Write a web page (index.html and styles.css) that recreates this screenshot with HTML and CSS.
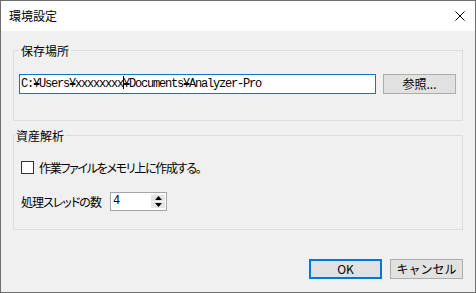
FILE: index.html
```html
<!DOCTYPE html>
<html lang="ja">
<head>
<meta charset="UTF-8">
<title>環境設定</title>
<link rel="stylesheet" href="styles.css">
</head>
<body>
<div class="window">
    <div class="titlebar">
        <span class="title">環境設定</span>
        <svg class="close" width="10" height="10" viewBox="0 0 10 10">
            <path d="M0.5 0.5 L9.5 9.5 M9.5 0.5 L0.5 9.5" stroke="#000" stroke-width="1" fill="none"/>
        </svg>
    </div>
    <div class="content">
        <div class="group group-path">
            <div class="group-title">保存場所</div>
            <div class="path-row">
                <div class="textbox">C:¥Users¥xxxxxxxx<span class="caret"></span>¥Documents¥Analyzer-Pro</div>
                <button class="btn">参照...</button>
            </div>
        </div>
        <div class="group group-analysis">
            <div class="group-title">資産解析</div>
            <label class="check-row"><span class="checkbox"></span>作業ファイルをメモリ上に作成する。</label>
            <div class="spin-row">
                <span class="spin-label">処理スレッドの数</span>
                <div class="spinbox">
                    <span class="spin-value">4</span>
                    <div class="spin-buttons">
                        <span class="spin-btn">
                            <svg width="7" height="4" viewBox="0 0 7 4"><path d="M3.5 0 L7 4 L0 4 Z" fill="#000"/></svg>
                        </span>
                        <span class="spin-btn">
                            <svg width="7" height="4" viewBox="0 0 7 4"><path d="M0 0 L7 0 L3.5 4 Z" fill="#000"/></svg>
                        </span>
                    </div>
                </div>
            </div>
        </div>
        <div class="footer">
            <button class="btn btn-default">OK</button>
            <button class="btn">キャンセル</button>
        </div>
    </div>
</div>
</body>
</html>
```

FILE: styles.css
```css
body {
    margin: 0;
    font-family: "Noto Sans CJK JP", sans-serif;
    font-size: 12px;
    color: #000000;
}
.window {
    width: 476px;
    height: 293px;
    box-sizing: border-box;
    border: 1px solid #6e6e6e;
    background-color: #f0f0f0;
    display: flex;
    flex-direction: column;
}
.titlebar {
    height: 30px;
    flex: none;
    background-color: #ffffff;
    display: flex;
    align-items: center;
    justify-content: space-between;
    padding: 0 10px 0 8px;
}
.title {
    line-height: 16px;
}
.content {
    flex: 1;
    padding: 19px 12px 0 12px;
}
.group {
    border: 1px solid #dcdcdc;
}
/* title sits on the top border, like a legend */
.group-title {
    width: max-content;
    margin-top: -8px;
    line-height: 15px;
    padding: 0 2px;
    background-color: #f0f0f0;
}
.group-path {
    padding: 0 6px 26px 5px;
}
.group-path .group-title {
    margin-left: 0;
}
.group-analysis {
    margin-top: 14px;
    padding: 0 6px 18px 7px;
}
.group-analysis .group-title {
    margin-left: -6px;
    padding: 0 1px;
}
.path-row {
    display: flex;
    gap: 7px;
    margin-top: 16px;
}
.textbox {
    width: 357px;
    height: 20px;
    box-sizing: border-box;
    border: 1px solid #0078d7;
    background-color: #ffffff;
    padding-left: 1px;
    font-family: "Liberation Mono", monospace;
    font-size: 12px;
    letter-spacing: -1.2px;
    line-height: 18px;
    white-space: nowrap;
}
.caret {
    display: inline-block;
    width: 0;
    height: 13px;
    border-left: 1px solid #000000;
    margin-right: -1px;
    vertical-align: -2px;
}
.btn {
    width: 73px;
    height: 20px;
    box-sizing: border-box;
    border: 1px solid #adadad;
    background-color: #e1e1e1;
    font-family: inherit;
    font-size: 12px;
    color: #000000;
    padding: 0;
    line-height: 16px;
}
.btn-default {
    border: 2px solid #0078d7;
}
.check-row {
    display: flex;
    align-items: center;
    height: 15px;
    margin-top: 17px;
    letter-spacing: -1.3px;
    font-feature-settings: "palt";
}
.checkbox {
    width: 13px;
    height: 13px;
    box-sizing: border-box;
    border: 1px solid #333333;
    background-color: #ffffff;
    margin-right: 5px;
}
.spin-row {
    display: flex;
    align-items: center;
    margin-top: 17px;
}
.spin-label {
    width: 89px;
    flex: none;
    letter-spacing: -1px;
    font-feature-settings: "palt";
}
.spinbox {
    width: 57px;
    height: 19px;
    box-sizing: border-box;
    border: 1px solid #a5a5a5;
    background-color: #ffffff;
    display: flex;
    justify-content: space-between;
    padding: 1px 1px 0 2px;
}
.spin-value {
    font-family: "Liberation Mono", monospace;
    font-size: 12px;
    line-height: 15px;
}
.spin-buttons {
    width: 14px;
    height: 14px;
    display: flex;
    flex-direction: column;
}
.spin-btn {
    flex: 1;
    display: flex;
    align-items: center;
    justify-content: center;
    background-color: #e5e5e5;
    border-top: 1px solid #f5f5f5;
}
.footer {
    display: flex;
    justify-content: flex-end;
    gap: 8px;
    margin-top: 29px;
}
```
